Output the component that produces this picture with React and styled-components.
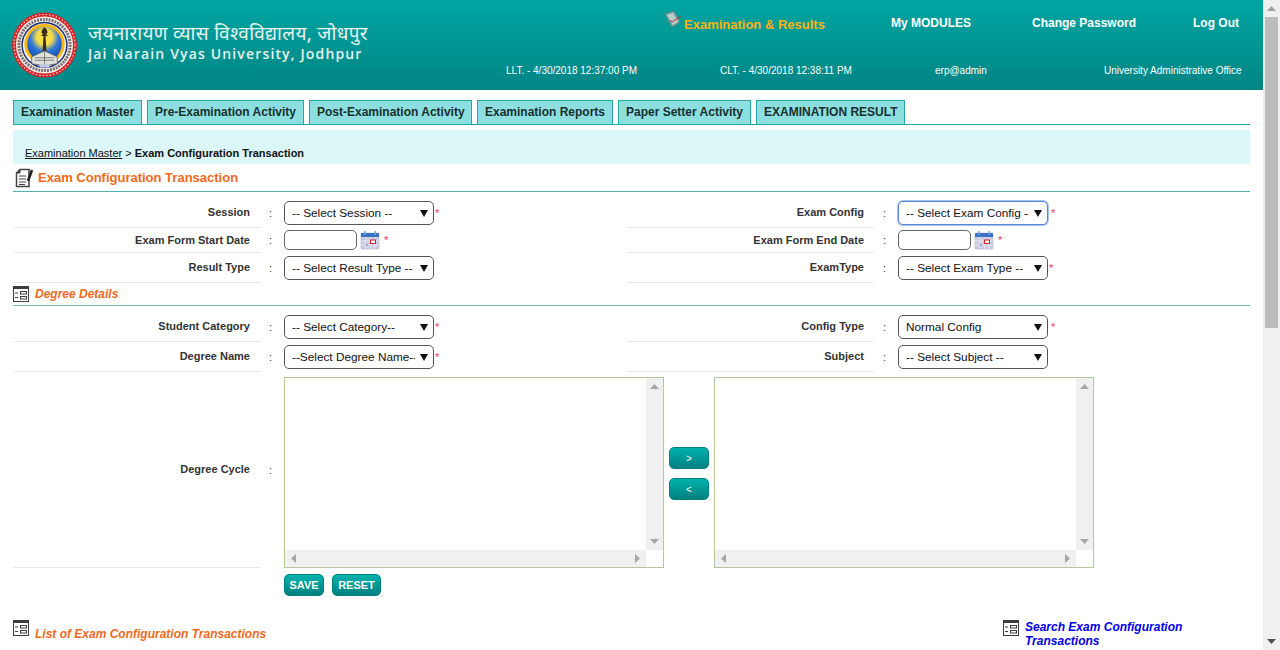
import styled, { createGlobalStyle } from "styled-components";

const arrow = `url("data:image/svg+xml,%3Csvg xmlns='http://www.w3.org/2000/svg' width='8' height='7'%3E%3Cpath d='M0 0h8L4 7z' fill='%23111'/%3E%3C/svg%3E")`;

const tabs = [
    { label: "Examination Master", width: 129 },
    { label: "Pre-Examination Activity", width: 157 },
    { label: "Post-Examination Activity", width: 163 },
    { label: "Examination Reports", width: 136 },
    { label: "Paper Setter Activity", width: 133 },
    { label: "EXAMINATION RESULT", width: 149 },
];

const GlobalStyle = createGlobalStyle`
    html, body {
        margin: 0;
        height: 650px;
        overflow: hidden;
        background: #fff;
        font-family: "Liberation Sans", Arial, sans-serif;
    }
`;

const Logo = () => (
    <svg width="65" height="66" viewBox="0 0 66 66">
        <defs>
            <radialGradient id="sky" cx="0.5" cy="0.3" r="0.75">
                <stop offset="0" stopColor="#ffe23a" />
                <stop offset="0.3" stopColor="#f5dc4a" />
                <stop offset="0.55" stopColor="#2f78d8" />
                <stop offset="1" stopColor="#0b3fa8" />
            </radialGradient>
        </defs>
        <circle cx="33" cy="33" r="31" fill="#f3ece0" stroke="#d8232a" strokeWidth="4" />
        <circle cx="33" cy="33" r="31" fill="none" stroke="#f7d6cf" strokeWidth="1.200" strokeDasharray="1.500 2" />
        <circle cx="33" cy="33" r="26" fill="none" stroke="#77707c" strokeWidth="3" strokeDasharray="2 1" />
        <circle cx="33" cy="33" r="23.500" fill="#1c2f7c" />
        <circle cx="33" cy="33" r="22" fill="#f5f3ea" />
        <circle cx="33" cy="32" r="20.500" fill="#f7b718" />
        <circle cx="33" cy="32" r="17.500" fill="url(#sky)" />
        <path d="M33 15c-2 2-3 3-3 5 0 1 1 2 2 2l-3 1 3 1-1 16h4l-1-16 3-1-3-1c1 0 2-1 2-2 0-2-1-3-3-5z" fill="#3b2a1e" />
        <path d="M20 45l13-6 13 6v7l-13 2-13-2z" fill="#e0e2dc" stroke="#555" strokeWidth="0.800" />
        <path d="M23 46h20M23 48.500h20M33 40v13" stroke="#555" strokeWidth="0.700" />
        <rect x="28" y="52" width="10" height="4" fill="#c6cbe0" />
    </svg>
);

const ExamIcon = () => (
    <svg width="20" height="18" viewBox="0 0 20 18">
        <path d="M2 4l9-3 6 11-8 5z" fill="#7fa8a8" stroke="#5f7f80" strokeWidth="0.800" />
        <path d="M4 5l6-2 5 9-5 3z" fill="#b9cccc" />
        <path d="M7 10l2 2 9-6" fill="none" stroke="#c0322a" strokeWidth="1" />
    </svg>
);

const DocIcon = () => (
    <svg width="19" height="20" viewBox="0 0 19 20">
        <path d="M5 1.500h9v17H1.500V5z" fill="#fff" stroke="#444" strokeWidth="1.500" />
        <path d="M1.500 5H5V1.500z" fill="#444" stroke="#444" />
        <path d="M4 8h7M4 11h7M4 14h7M4 16.500h6" stroke="#444" strokeWidth="1.200" />
        <path d="M13 13L17 2" stroke="#222" strokeWidth="2.600" />
    </svg>
);

const ListIcon = () => (
    <svg width="16" height="16" viewBox="0 0 16 16">
        <rect x="0.500" y="0.500" width="15" height="15" fill="#fff" stroke="#3d3d3d" />
        <rect x="0" y="0" width="16" height="3" fill="#3d3d3d" />
        <path d="M2 7h3M2 11.500h3" stroke="#3d3d3d" />
        <rect x="7.500" y="5.500" width="6" height="2.500" fill="#fff" stroke="#3d3d3d" />
        <rect x="7.500" y="10.500" width="6" height="2.500" fill="#fff" stroke="#3d3d3d" />
    </svg>
);

const CalendarIcon = () => (
    <svg width="20" height="20" viewBox="0 0 20 20">
        <rect x="1" y="3" width="18" height="16" rx="1" fill="#c9cce0" stroke="#b0b3c8" strokeWidth="0.600" />
        <path d="M1 4a1 1 0 0 1 1-1h16a1 1 0 0 1 1 1v3H1z" fill="#3a72c6" />
        <rect x="4" y="1" width="1.500" height="4" fill="#7ca2d8" />
        <rect x="14.500" y="1" width="1.500" height="4" fill="#7ca2d8" />
        <path d="M1 11h18M1 15h18M6 7v12M10.500 7v12M15 7v12" stroke="#eceef6" strokeWidth="0.700" />
        <rect x="10.500" y="10" width="5" height="3.500" fill="#fff" stroke="#d31f26" strokeWidth="1" />
        <rect x="6" y="14" width="1.500" height="1.500" fill="#7d7f99" />
    </svg>
);

const ScrollTriangle = ({ dir, color = "#a6a6a6" }) => {
    const paths = {
        up: "M0 5L4.500 0 9 5z",
        down: "M0 0h9L4.500 5z",
        left: "M5 0v9L0 4.500z",
        right: "M0 0v9l5-4.500z",
    };
    const size = dir === "up" || dir === "down" ? [9, 5] : [5, 9];
    return (
        <svg width={size[0]} height={size[1]} viewBox={`0 0 ${size[0]} ${size[1]}`}>
            <path d={paths[dir]} fill={color} />
        </svg>
    );
};

const ListBox = () => (
    <ListFrame>
        <ListBody />
        <VerticalBar>
            <ScrollTriangle dir="up" />
            <ScrollTriangle dir="down" />
        </VerticalBar>
        <HorizontalBar>
            <ScrollTriangle dir="left" />
            <ScrollTriangle dir="right" />
        </HorizontalBar>
        <BarCorner />
    </ListFrame>
);

const App = () => {
    return (
        <>
            <GlobalStyle />
            <Screen>
                <Page>
                    <Header>
                        <Brand>
                            <Logo />
                            <BrandText>
                                <HindiName>जयनारायण व्यास विश्वविद्यालय, जोधपुर</HindiName>
                                <EnglishName>Jai Narain Vyas University, Jodhpur</EnglishName>
                            </BrandText>
                        </Brand>
                        <HeaderRight>
                            <NavRow>
                                <NavItem $width={207} $active>
                                    <ExamSlot><ExamIcon /></ExamSlot>
                                    Examination &amp; Results
                                </NavItem>
                                <NavItem $width={141}>My MODULES</NavItem>
                                <NavItem $width={161}>Change Password</NavItem>
                                <NavItem $width={60}>Log Out</NavItem>
                            </NavRow>
                            <InfoRow>
                                <InfoItem $width={214}>LLT. - 4/30/2018 12:37:00 PM</InfoItem>
                                <InfoItem $width={215}>CLT. - 4/30/2018 12:38:11 PM</InfoItem>
                                <InfoItem $width={169}>erp@admin</InfoItem>
                                <InfoItem $width={140}>University Administrative Office</InfoItem>
                            </InfoRow>
                        </HeaderRight>
                    </Header>

                    <Content>
                        <TabBar>
                            {tabs.map((tab) => (
                                <Tab key={tab.label} $width={tab.width}>{tab.label}</Tab>
                            ))}
                        </TabBar>

                        <Breadcrumb>
                            <CrumbLink>Examination Master</CrumbLink>
                            <span> &gt; </span>
                            <CrumbCurrent>Exam Configuration Transaction</CrumbCurrent>
                        </Breadcrumb>

                        <PageTitle>
                            <DocIcon />
                            <span>Exam Configuration Transaction</span>
                        </PageTitle>

                        <FormRow $height={28} $top={8} $labelPad={3} $lift={2}>
                            <Label>Session</Label>
                            <Colon>:</Colon>
                            <Control>
                                <Select defaultValue="">
                                    <option value="">-- Select Session --</option>
                                </Select>
                                <Required>*</Required>
                            </Control>
                            <Label>Exam Config</Label>
                            <Colon>:</Colon>
                            <Control>
                                <Select $focused defaultValue="">
                                    <option value="">-- Select Exam Config --</option>
                                </Select>
                                <Required $gap={3}>*</Required>
                            </Control>
                        </FormRow>
                        <FormRow $height={25} $lift={1}>
                            <Label>Exam Form Start Date</Label>
                            <Colon>:</Colon>
                            <Control>
                                <DateInput />
                                <CalendarSlot><CalendarIcon /></CalendarSlot>
                                <Required $gap={4}>*</Required>
                            </Control>
                            <Label>Exam Form End Date</Label>
                            <Colon>:</Colon>
                            <Control>
                                <DateInput />
                                <CalendarSlot><CalendarIcon /></CalendarSlot>
                                <Required $gap={4}>*</Required>
                            </Control>
                        </FormRow>
                        <FormRow $height={30}>
                            <Label>Result Type</Label>
                            <Colon>:</Colon>
                            <Control>
                                <Select defaultValue="">
                                    <option value="">-- Select Result Type --</option>
                                </Select>
                            </Control>
                            <Label>ExamType</Label>
                            <Colon>:</Colon>
                            <Control>
                                <Select defaultValue="">
                                    <option value="">-- Select Exam Type --</option>
                                </Select>
                                <Required>*</Required>
                            </Control>
                        </FormRow>

                        <SectionHead>
                            <ListIcon />
                            <SectionTitle>Degree Details</SectionTitle>
                        </SectionHead>

                        <FormRow $height={30} $top={6}>
                            <Label>Student Category</Label>
                            <Colon>:</Colon>
                            <Control>
                                <Select defaultValue="">
                                    <option value="">-- Select Category--</option>
                                </Select>
                                <Required>*</Required>
                            </Control>
                            <Label>Config Type</Label>
                            <Colon>:</Colon>
                            <Control>
                                <Select defaultValue="">
                                    <option value="">Normal Config</option>
                                </Select>
                                <Required $gap={3}>*</Required>
                            </Control>
                        </FormRow>
                        <FormRow $height={30}>
                            <Label>Degree Name</Label>
                            <Colon>:</Colon>
                            <Control>
                                <Select defaultValue="">
                                    <option value="">--Select Degree Name--</option>
                                </Select>
                                <Required>*</Required>
                            </Control>
                            <Label>Subject</Label>
                            <Colon>:</Colon>
                            <Control>
                                <Select defaultValue="">
                                    <option value="">-- Select Subject --</option>
                                </Select>
                            </Control>
                        </FormRow>

                        <CycleRow>
                            <Label>Degree Cycle</Label>
                            <Colon>:</Colon>
                            <CyclePicker>
                                <ListBox />
                                <MoveButtons>
                                    <MoveButton>&gt;</MoveButton>
                                    <MoveButton>&lt;</MoveButton>
                                </MoveButtons>
                                <ListBox />
                            </CyclePicker>
                        </CycleRow>

                        <Actions>
                            <ActionButton $width={40}>SAVE</ActionButton>
                            <ActionButton $width={49}>RESET</ActionButton>
                        </Actions>

                        <ListHeader>
                            <SectionLink>
                                <ListIcon />
                                <SectionTitle>List of Exam Configuration Transactions</SectionTitle>
                            </SectionLink>
                            <SearchLink>
                                <ListIcon />
                                <SearchText>Search Exam Configuration Transactions</SearchText>
                            </SearchLink>
                        </ListHeader>
                    </Content>
                </Page>

                <PageScrollbar>
                    <ScrollEnd><ScrollTriangle dir="up" color="#a0a0a0" /></ScrollEnd>
                    <ScrollTrack><ScrollThumb /></ScrollTrack>
                    <ScrollEnd><ScrollTriangle dir="down" color="#505050" /></ScrollEnd>
                </PageScrollbar>
            </Screen>
        </>
    );
};

export default App;

const Screen = styled.div`
    display: flex;
    height: 650px;
    overflow: hidden;
`;

const Page = styled.div`
    width: 1263px;
    flex: none;
`;

const Header = styled.header`
    height: 90px;
    display: flex;
    background: linear-gradient(180deg, #00a5a2 0%, #008584 100%);
    color: #fff;
`;

const Brand = styled.div`
    width: 505px;
    flex: none;
    display: flex;
    align-items: center;
    gap: 11px;
    padding-left: 12px;
    box-sizing: border-box;
`;

const BrandText = styled.div`
    display: flex;
    flex-direction: column;
    margin-bottom: 5px;
    color: #e6f3ef;
`;

const HindiName = styled.div`
    font-family: "Noto Sans", "Noto Sans Devanagari", "Lohit Devanagari", "DejaVu Sans", sans-serif;
    font-size: 19px;
    line-height: 23px;
    letter-spacing: 0.3px;
    white-space: nowrap;
`;

const EnglishName = styled.div`
    font-family: "Open Sans", sans-serif;
    font-size: 14px;
    font-weight: 600;
    line-height: 18px;
    letter-spacing: 1.15px;
    white-space: nowrap;
`;

const HeaderRight = styled.div`
    flex: 1;
    display: flex;
    flex-direction: column;
`;

const NavRow = styled.nav`
    display: flex;
    height: 48px;
    padding-left: 179px;
    align-items: center;
`;

const NavItem = styled.a`
    width: ${(props) => props.$width}px;
    flex: none;
    position: relative;
    margin-top: ${(props) => (props.$active ? 2 : 0)}px;
    font-size: ${(props) => (props.$active ? "13px" : "12px")};
    font-weight: bold;
    white-space: nowrap;
    color: ${(props) => (props.$active ? "#fbb40f" : "#fff")};
`;

const ExamSlot = styled.span`
    position: absolute;
    left: -21px;
    top: -7px;
`;

const InfoRow = styled.div`
    display: flex;
    padding: 4px 0 0 1px;
    height: 44px;
    box-sizing: border-box;
    align-items: center;
`;

const InfoItem = styled.span`
    width: ${(props) => props.$width}px;
    flex: none;
    padding-top: 1px;
    font-size: 10px;
    white-space: nowrap;
`;

const Content = styled.main`
    padding: 10px 13px 0;
`;

const TabBar = styled.div`
    display: flex;
    gap: 5px;
    height: 24px;
    border-bottom: 1px solid #1fa8a8;
`;

const Tab = styled.a`
    width: ${(props) => props.$width}px;
    height: 24px;
    box-sizing: border-box;
    background: #8ddfdf;
    border: 1px solid #2aa5a5;
    border-bottom: none;
    font-size: 12px;
    font-weight: bold;
    color: #173030;
    line-height: 23px;
    padding-left: 7px;
    white-space: nowrap;
`;

const Breadcrumb = styled.div`
    margin-top: 5px;
    height: 34px;
    box-sizing: border-box;
    padding: 16px 0 0 12px;
    background: #dcf7f7;
    font-size: 11px;
    line-height: 14px;
    color: #111;
`;

const CrumbLink = styled.a`
    text-decoration: underline;
`;

const CrumbCurrent = styled.span`
    font-weight: bold;
`;

const PageTitle = styled.div`
    height: 27px;
    display: flex;
    align-items: center;
    gap: 4px;
    padding-left: 2px;
    border-bottom: 1px solid #4fb3b3;
    color: #f26a1c;
    font-size: 13px;
    font-weight: bold;
`;

const FormRow = styled.div`
    --label-pad: ${(props) => props.$labelPad ?? 1}px;
    --lift: ${(props) => props.$lift ?? 0}px;
    display: grid;
    grid-template-columns: 247px 24px 343px 247px 24px 1fr;
    height: ${(props) => props.$height}px;
    margin-top: ${(props) => props.$top || 0}px;
    align-items: center;
`;

const Label = styled.div`
    height: 100%;
    box-sizing: border-box;
    display: flex;
    align-items: center;
    justify-content: flex-end;
    padding: 0 10px var(--label-pad, 1px) 0;
    border-bottom: 1px solid #e8e8e8;
    font-size: 11px;
    font-weight: bold;
    color: #333;
`;

const Colon = styled.div`
    font-size: 11px;
    padding: 0 0 var(--label-pad, 1px) 9px;
    color: #333;
`;

const Control = styled.div`
    display: flex;
    align-items: center;
    margin-bottom: var(--lift, 0);
`;

const Select = styled.select`
    appearance: none;
    width: 150px;
    height: 24px;
    box-sizing: border-box;
    padding: 0 18px 0 7px;
    border: 1px solid ${(props) => (props.$focused ? "#5b86d6" : "#555")};
    border-radius: 5px;
    background: #fff ${arrow} no-repeat right 5px top 8px;
    font-family: "Liberation Sans", Arial, sans-serif;
    font-size: 11.8px;
    color: #111;
    box-shadow: ${(props) => (props.$focused ? "0 0 0 1px #a9c4f0" : "none")};
`;

const Required = styled.span`
    margin-left: ${(props) => props.$gap || 1}px;
    color: #e8386f;
    font-size: 11px;
    line-height: 11px;
`;

const DateInput = styled.input`
    width: 73px;
    height: 20px;
    box-sizing: border-box;
    border: 1px solid #666;
    border-radius: 5px;
    padding: 0;
    background: #fff;
`;

const CalendarSlot = styled.span`
    display: flex;
    margin-left: 3px;
`;

const SectionHead = styled.div`
    height: 23px;
    box-sizing: border-box;
    display: flex;
    align-items: center;
    gap: 6px;
    border-bottom: 1px solid #6dbbaa;
`;

const SectionTitle = styled.span`
    color: #f2691c;
    font-size: 12px;
    font-weight: bold;
    font-style: italic;
`;

const CycleRow = styled.div`
    display: grid;
    grid-template-columns: 247px 24px 1fr;
    height: 196px;
    align-items: center;
`;

const CyclePicker = styled.div`
    display: flex;
    align-items: center;
    gap: 5px;
    padding-top: 5px;
`;

const ListFrame = styled.div`
    width: 380px;
    height: 191px;
    box-sizing: border-box;
    border: 1px solid #b4c8a0;
    display: grid;
    grid-template-columns: 1fr 17px;
    grid-template-rows: 1fr 17px;
`;

const ListBody = styled.div`
    background: #fff;
`;

const VerticalBar = styled.div`
    background: #f0f0f0;
    display: flex;
    flex-direction: column;
    justify-content: space-between;
    align-items: center;
    padding: 6px 0;
`;

const HorizontalBar = styled.div`
    background: #f0f0f0;
    display: flex;
    justify-content: space-between;
    align-items: center;
    padding: 0 6px;
`;

const BarCorner = styled.div`
    background: #fff;
`;

const MoveButtons = styled.div`
    display: flex;
    flex-direction: column;
    gap: 9px;
    margin-top: 2px;
`;

const MoveButton = styled.button`
    width: 40px;
    height: 22px;
    padding: 0;
    border: 1px solid #007f7f;
    border-radius: 5px;
    background: linear-gradient(180deg, #00b2ad 0%, #00807f 100%);
    color: #fff;
    font-family: "Liberation Sans", Arial, sans-serif;
    font-size: 10px;
`;

const Actions = styled.div`
    display: flex;
    gap: 8px;
    margin-top: 6px;
    padding-left: 271px;
`;

const ActionButton = styled.button`
    width: ${(props) => props.$width}px;
    height: 22px;
    padding: 0;
    border: 1px solid #008080;
    border-radius: 5px;
    background: linear-gradient(180deg, #00b2ad 0%, #00807f 100%);
    color: #fff;
    font-family: "Liberation Sans", Arial, sans-serif;
    font-size: 11px;
    font-weight: bold;
`;

const ListHeader = styled.div`
    display: flex;
    justify-content: space-between;
    align-items: flex-start;
    margin-top: 24px;
`;

const SectionLink = styled.div`
    display: flex;
    gap: 6px;
    align-items: flex-start;
    line-height: 28px;
`;

const SearchLink = styled.a`
    display: flex;
    gap: 6px;
    width: 247px;
    flex: none;
`;

const SearchText = styled.span`
    width: 190px;
    color: #0000ee;
    font-size: 12px;
    font-weight: bold;
    font-style: italic;
    line-height: 14px;
`;

const PageScrollbar = styled.div`
    width: 17px;
    flex: none;
    display: flex;
    flex-direction: column;
    background: #f0f0f0;
`;

const ScrollEnd = styled.div`
    height: 17px;
    display: flex;
    align-items: center;
    justify-content: center;
`;

const ScrollTrack = styled.div`
    flex: 1;
    padding: 0 2px;
`;

const ScrollThumb = styled.div`
    height: 311px;
    background: #bcbcbc;
`;
